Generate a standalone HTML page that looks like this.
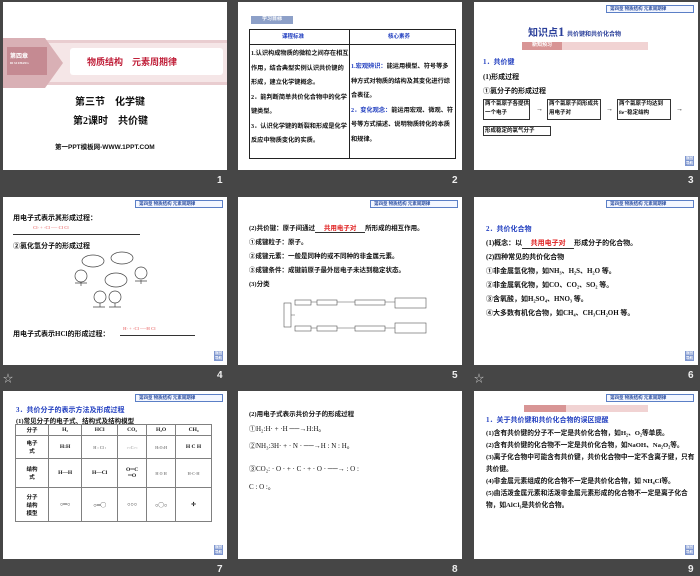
<!DOCTYPE html>
<html><head><meta charset="utf-8"><style>
*{margin:0;padding:0;box-sizing:border-box}
body{width:700px;height:576px;background:#464646;position:relative;overflow:hidden;font-family:"Liberation Serif","Noto Sans CJK SC",sans-serif;}
.s{position:absolute;background:#fff;width:224px;height:168px;overflow:hidden;font-size:7px;color:#111;font-weight:bold}
.n{position:absolute;color:#eee;font:bold 10px "Liberation Sans",sans-serif}
.st{position:absolute;color:#ccc;font-size:10px}
.hd{position:absolute;right:4px;top:3px;width:88px;height:8px;border:1px solid #5b7fc6;font-size:4.5px;color:#2d4fa0;line-height:6px;padding-left:3px;background:#f4f7ff}
.bk{position:absolute;right:4px;bottom:4px;width:9px;height:10px;background:#7e96cf;font-size:3.5px;color:#fff;line-height:5px;text-align:center}
.a{position:absolute;white-space:nowrap}
.blue{color:#2340c0}.red{color:#e02020}
table{border-collapse:collapse}
</style></head><body>

<!-- slide 1 -->
<div class="s" style="left:3px;top:2px">
 <div class="a" style="left:0;top:38px;width:224px;height:45px;background:#e9cdd0"></div>
 <div class="a" style="left:0;top:41px;width:224px;height:39px;background:#f5e6e7"></div>
 <div class="a" style="left:0;top:36px;width:60px;height:50px;background:#d9b0b5;clip-path:polygon(0 0,70% 0,100% 50%,70% 100%,0 100%)"></div>
 <div class="a" style="left:4px;top:45px;width:40px;height:28px;background:#c58a92;color:#fff;font-size:6px;padding:4px 3px">第四章<br><span style="font-size:3px">DI SI ZHANG</span></div>
 <div class="a" style="left:67px;top:46px;width:153px;height:27px;background:#fff;border-radius:3px"></div>
 <div class="a" style="left:84px;top:53px;font-size:9px;color:#c0203a;font-family:'Noto Sans CJK SC',sans-serif">物质结构　元素周期律</div>
 <div class="a" style="left:72px;top:91px;font-size:10px">第三节　化学键</div>
 <div class="a" style="left:70px;top:110px;font-size:10px">第2课时　共价键</div>
 <div class="a" style="left:52px;top:139px;font-size:6.5px;font-family:'Liberation Sans','Noto Sans CJK SC',sans-serif">第一PPT模板网-WWW.1PPT.COM</div>
</div>
<div class="n" style="left:217px;top:175px">1</div>

<!-- slide 2 -->
<div class="s" style="left:238px;top:2px">
 <div class="a" style="left:13px;top:14px;width:42px;height:8px;background:#8da0c8;color:#fff;font-size:5px;line-height:8px;text-align:center">学习目标</div>
 <div class="a" style="left:11px;top:27px;width:207px;height:130px;border:1px solid #222"></div>
 <div class="a" style="left:111px;top:27px;width:1px;height:130px;background:#222"></div>
 <div class="a" style="left:11px;top:42px;width:207px;height:1px;background:#222"></div>
 <div class="a blue" style="left:44px;top:30px;font-size:5.5px">课程标准</div>
 <div class="a blue" style="left:150px;top:30px;font-size:5.5px">核心素养</div>
 <div class="a" style="left:13px;top:45px;line-height:14.5px;white-space:normal;width:98px;font-size:6.2px">1.认识构成物质的微粒之间存在相互作用，结合典型实例认识共价键的形成，建立化学键概念。<br>2．能判断简单共价化合物中的化学键类型。<br>3．认识化学键的断裂和形成是化学反应中物质变化的实质。</div>
 <div class="a" style="left:113px;top:58px;line-height:14.5px;white-space:normal;width:103px;font-size:6.2px"><span class="blue">1.宏观辨识：</span>能运用模型、符号等多种方式对物质的结构及其变化进行综合表征。<br><span class="blue">2．变化观念：</span>能运用宏观、微观、符号等方式描述、说明物质转化的本质和规律。</div>
</div>
<div class="n" style="left:452px;top:175px">2</div>

<!-- slide 3 -->
<div class="s" style="left:474px;top:2px">
 <div class="hd">第四章 物质结构 元素周期律</div>
 <div class="a" style="left:54px;top:22px;font-size:10px;color:#2a3f9a">知识点<b style="font-size:13px">1</b> <span style="font-size:6px">共价键和共价化合物</span></div>
 <div class="a" style="left:48px;top:40px;width:126px;height:8px;background:#f1d3d3"></div>
 <div class="a" style="left:48px;top:40px;width:40px;height:8px;background:#d89595;color:#fff;font-size:5px;text-align:center;line-height:8px">新知预习</div>
 <div class="a" style="left:9px;top:55px;color:#2340c0">1．共价键</div>
 <div class="a" style="left:9px;top:70px">(1)形成过程</div>
 <div class="a" style="left:9px;top:84px">①氯分子的形成过程</div>
 <div class="a" style="left:9px;top:97px;width:47px;height:21px;border:1px solid #333;font-size:5.5px;line-height:9px;padding-left:1px;white-space:normal">两个氯原子各提供一个电子</div>
 <div class="a" style="left:62px;top:103px">→</div>
 <div class="a" style="left:73px;top:97px;width:54px;height:21px;border:1px solid #333;font-size:5.5px;line-height:9px;padding-left:1px;white-space:normal">两个氯原子间形成共用电子对</div>
 <div class="a" style="left:132px;top:103px">→</div>
 <div class="a" style="left:143px;top:97px;width:54px;height:21px;border:1px solid #333;font-size:5.5px;line-height:9px;padding-left:1px;white-space:normal">两个氯原子均达到8e⁻稳定结构</div>
 <div class="a" style="left:202px;top:103px">→</div>
 <div class="a" style="left:9px;top:124px;width:68px;height:10px;border:1px solid #333;font-size:5.5px;line-height:8px;padding-left:1px">形成稳定的氯气分子</div>
 <div class="bk">返回<br>导航</div>
</div>
<div class="n" style="left:688px;top:175px">3</div>

<!-- slide 4 -->
<div class="s" style="left:3px;top:197px">
 <div class="hd">第四章 物质结构 元素周期律</div>
 <div class="a" style="left:10px;top:16px">用电子式表示其形成过程：</div>
 <div class="a" style="left:30px;top:28px;font-size:4.5px;color:#e88">Cl· + ·Cl ── Cl Cl</div>
 <div class="a" style="left:10px;top:37px;width:127px;height:1px;background:#333"></div>
 <div class="a" style="left:10px;top:44px">②氯化氢分子的形成过程</div>
 <svg class="a" style="left:70px;top:54px" width="80" height="65" viewBox="0 0 80 65" fill="none" stroke="#444" stroke-width=".7">
  <ellipse cx="20" cy="10" rx="11" ry="6"/><ellipse cx="49" cy="7" rx="11" ry="6"/><ellipse cx="43" cy="29" rx="11" ry="7"/>
  <circle cx="8" cy="25" r="6"/><circle cx="68" cy="22" r="6"/><circle cx="27" cy="46" r="6"/><circle cx="42" cy="46" r="6"/>
  <path d="M2 32h12M62 30h12M20 56h12M36 56h12M8 31v4M68 29v4M27 52v4M42 52v4"/>
 </svg>
 <div class="a" style="left:10px;top:132px">用电子式表示HCl的形成过程：</div>
 <div class="a" style="left:120px;top:129px;font-size:4.5px;color:#e88">H· + ·Cl ──H Cl</div>
 <div class="a" style="left:117px;top:138px;width:75px;height:1px;background:#333"></div>
 <div class="bk">返回<br>导航</div>
</div>
<div class="st" style="left:3px;top:370px">☆</div>
<div class="n" style="left:217px;top:370px">4</div>

<!-- slide 5 -->
<div class="s" style="left:238px;top:197px">
 <div class="hd">第四章 物质结构 元素周期律</div>
 <div class="a" style="left:11px;top:25px;font-size:6.5px">(2)共价键：原子间通过<span style="display:inline-block;width:50px;border-bottom:1px solid #333;color:#e02020;text-align:center">共用电子对</span>所形成的相互作用。</div>
 <div class="a" style="left:11px;top:39px;font-size:6.5px">①成键粒子：原子。</div>
 <div class="a" style="left:11px;top:53px;font-size:6.5px">②成键元素：一般是同种的或不同种的非金属元素。</div>
 <div class="a" style="left:11px;top:67px;font-size:6.5px">③成键条件：成键前原子最外层电子未达到稳定状态。</div>
 <div class="a" style="left:11px;top:81px;font-size:6.5px">(3)分类</div>
 <svg class="a" style="left:45px;top:100px" width="145" height="42" viewBox="0 0 145 42" fill="none" stroke="#555" stroke-width=".6">
  <rect x="1" y="6" width="7" height="24"/><rect x="12" y="3" width="16" height="5"/><rect x="12" y="29" width="16" height="5"/>
  <rect x="34" y="3" width="20" height="5"/><rect x="34" y="29" width="20" height="5"/>
  <rect x="72" y="3" width="30" height="5"/><rect x="72" y="29" width="30" height="5"/>
  <rect x="112" y="1" width="31" height="10"/><rect x="112" y="26" width="31" height="10"/>
  <path d="M28 5h6M54 5h18M102 5h10M28 31h6M54 31h18M102 31h10M8 18h4"/>
 </svg>
</div>
<div class="n" style="left:452px;top:370px">5</div>

<!-- slide 6 -->
<div class="s" style="left:474px;top:197px">
 <div class="hd">第四章 物质结构 元素周期律</div>
 <div class="a blue" style="left:12px;top:27px">2．共价化合物</div>
 <div class="a" style="left:12px;top:41px">(1)概念：以<span style="display:inline-block;width:52px;border-bottom:1px solid #333;color:#e02020;text-align:center">共用电子对</span>形成分子的化合物。</div>
 <div class="a" style="left:12px;top:55px">(2)四种常见的共价化合物</div>
 <div class="a" style="left:12px;top:69px">①非金属氢化物，如NH₃、H₂S、H₂O 等。</div>
 <div class="a" style="left:12px;top:83px">②非金属氧化物，如CO、CO₂、SO₂ 等。</div>
 <div class="a" style="left:12px;top:97px">③含氧酸，如H₂SO₄、HNO₃ 等。</div>
 <div class="a" style="left:12px;top:111px">④大多数有机化合物，如CH₄、CH₃CH₂OH 等。</div>
 <div class="bk">返回<br>导航</div>
</div>
<div class="st" style="left:474px;top:370px">☆</div>
<div class="n" style="left:688px;top:370px">6</div>

<!-- slide 7 -->
<div class="s" style="left:3px;top:391px">
 <div class="hd">第四章 物质结构 元素周期律</div>
 <div class="a blue" style="left:13px;top:14px">3．共价分子的表示方法及形成过程</div>
 <div class="a" style="left:13px;top:24px;font-size:6.5px">(1)常见分子的电子式、结构式及结构模型</div>
 <table class="a" style="left:12px;top:33px;width:197px;font-size:5.5px;text-align:center" border="1">
  <tr style="height:11px"><td style="width:33px">分子</td><td>H₂</td><td>HCl</td><td>CO₂</td><td>H₂O</td><td>CH₄</td></tr>
  <tr style="height:23px"><td>电子<br>式</td><td>H:H</td><td style="font-size:4px;color:#888">H : Cl :</td><td style="font-size:4px;color:#aaa">:·:C:·:</td><td style="font-size:4px;color:#888">H:O:H</td><td>H C H</td></tr>
  <tr style="height:29px"><td>结构<br>式</td><td>H—H</td><td>H—Cl</td><td>O═C<br>═O</td><td style="font-size:4px;color:#888">H O H</td><td style="font-size:4px;color:#888">H-C-H</td></tr>
  <tr style="height:34px"><td>分子<br>结构<br>模型</td><td>○═○</td><td>○═◯</td><td>○○○</td><td>○◯○</td><td>✢</td></tr>
 </table>
 <div class="bk">返回<br>导航</div>
</div>
<div class="n" style="left:217px;top:564px">7</div>

<!-- slide 8 -->
<div class="s" style="left:238px;top:391px">
 <div class="a" style="left:11px;top:17px;font-size:6.5px">(2)用电子式表示共价分子的形成过程</div>
 <div class="a" style="left:11px;top:33px;font-weight:normal;font-size:7px">①H₂:H· + ·H ──→H:H。</div>
 <div class="a" style="left:11px;top:50px;font-weight:normal;font-size:7px">②NH₃:3H· + · N · ──→H : N : H。</div>
 <div class="a" style="left:11px;top:73px;font-weight:normal;font-size:7px">③CO₂: · O · + · C · + · O · ──→ : O :</div>
 <div class="a" style="left:11px;top:91px;font-weight:normal;font-size:7px">C : O :。</div>
</div>
<div class="n" style="left:452px;top:564px">8</div>

<!-- slide 9 -->
<div class="s" style="left:474px;top:391px">
 <div class="hd">第四章 物质结构 元素周期律</div>
 <div class="a" style="left:50px;top:14px;width:124px;height:7px;background:#f1d3d3"></div>
 <div class="a" style="left:50px;top:14px;width:42px;height:7px;background:#d89595"></div>
 <div class="a blue" style="left:12px;top:24px">1．关于共价键和共价化合物的误区提醒</div>
 <div class="a" style="left:12px;top:37px;line-height:12px;white-space:normal;width:210px;font-size:6.7px">(1)含有共价键的分子不一定是共价化合物，如H₂、O₂等单质。<br>(2)含有共价键的化合物不一定是共价化合物，如NaOH、Na₂O₂等。<br>(3)离子化合物中可能含有共价键，共价化合物中一定不含离子键，只有共价键。<br>(4)非金属元素组成的化合物不一定是共价化合物，如 NH₄Cl等。<br>(5)由活泼金属元素和活泼非金属元素形成的化合物不一定是离子化合物，如AlCl₃是共价化合物。</div>
 <div class="bk">返回<br>导航</div>
</div>
<div class="n" style="left:688px;top:564px">9</div>
</body></html>
